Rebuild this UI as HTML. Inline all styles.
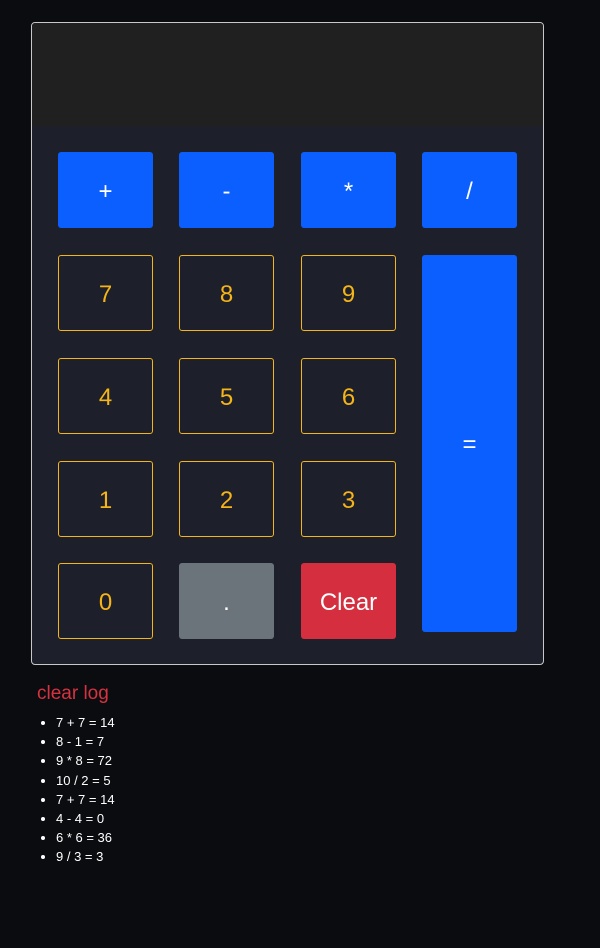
<!DOCTYPE html>
<html><head><style>
body{margin:0;background:#0b0c10;width:600px;height:948px;font-family:"Liberation Sans",sans-serif;position:relative;overflow:hidden}
.calc{position:absolute;left:31px;top:22px;width:511px;height:641px;border:1px solid #c8c8c8;border-radius:4px;background:#1d202a;overflow:hidden}
.disp{position:absolute;left:0;top:0;width:100%;height:103px;background:#212021}
.b{position:absolute;width:95px;height:76px;box-sizing:border-box;border-radius:3px;display:flex;align-items:center;justify-content:center;font-size:24px;padding-top:3px}
.op{background:#0b5ffe;color:#fff}
.n{border:1px solid #f5b418;color:#f5b418;background:#1d202a}
.log{position:absolute;left:37px;top:683px;color:#d6323f;font-size:19px}
ul{position:absolute;left:18px;top:713px;margin:0;padding-left:38px;color:#fff;font-size:13px;line-height:19.2px}
</style></head><body>
<div class="calc"><div class="disp"></div></div>
<div class="b op" style="left:58px;top:152px">+</div>
<div class="b op" style="left:179px;top:152px">-</div>
<div class="b op" style="left:301px;top:152px">*</div>
<div class="b op" style="left:422px;top:152px">/</div>
<div class="b n" style="left:58px;top:255px">7</div>
<div class="b n" style="left:179px;top:255px">8</div>
<div class="b n" style="left:301px;top:255px">9</div>
<div class="b n" style="left:58px;top:358px">4</div>
<div class="b n" style="left:179px;top:358px">5</div>
<div class="b n" style="left:301px;top:358px">6</div>
<div class="b n" style="left:58px;top:461px">1</div>
<div class="b n" style="left:179px;top:461px">2</div>
<div class="b n" style="left:301px;top:461px">3</div>
<div class="b n" style="left:58px;top:563px">0</div>
<div class="b" style="left:179px;top:563px;background:#6b737b;color:#fff">.</div>
<div class="b" style="left:301px;top:563px;background:#d52e3e;color:#fff">Clear</div>
<div class="b op" style="left:422px;top:255px;height:377px">=</div>
<div class="log">clear log</div>
<ul><li>7 + 7 = 14</li><li>8 - 1 = 7</li><li>9 * 8 = 72</li><li>10 / 2 = 5</li><li>7 + 7 = 14</li><li>4 - 4 = 0</li><li>6 * 6 = 36</li><li>9 / 3 = 3</li></ul>
</body></html>
